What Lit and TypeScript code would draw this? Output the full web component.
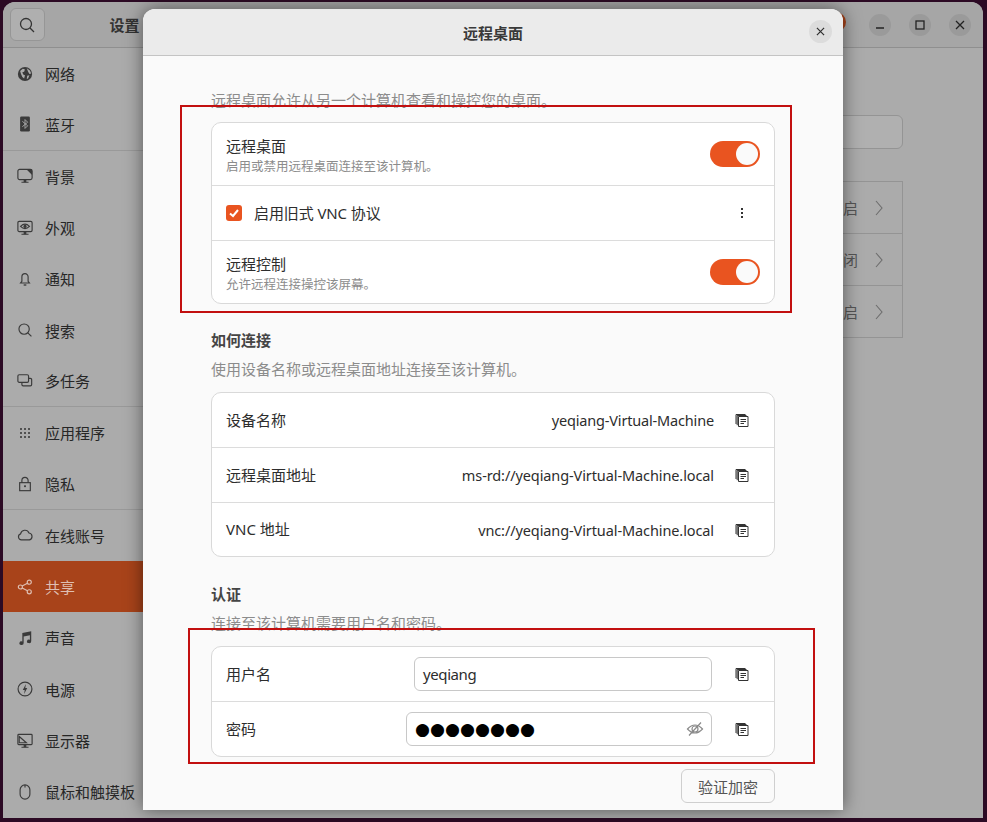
import { LitElement, html, css } from 'lit';
import { customElement } from 'lit/decorators.js';

const S = 'fill="none" stroke="currentColor" stroke-width="1.3"';

// sidebar icons, 18x18 box
const icons: Record<string, string> = {
  globe: `<circle cx="9" cy="9" r="8" fill="currentColor"/><path d="M3.500 5.500l3-2.500 2.500 1-1 2.500-2 .5 1 2.500 2 1-1 3.500-2-1.500-1.500-3.500zM11 2.500l3.500 2.500 1.500 3.500-2 .5-1.500-2.500zM11.500 11l2.500-.5-1.500 3.500-1.500.5z" fill="#ababab"/>`,
  bluetooth: `<rect x="3.500" y="0.500" width="11" height="17" rx="1.500" fill="currentColor"/><path d="M6 6l6 5-3 3V4l3 3-6 5" fill="none" stroke="#ababab" stroke-width="1"/>`,
  wallpaper: `<rect x="1" y="1.500" width="16" height="11.500" rx="2" ${S}/><path ${S} d="M5 16h8"/><path d="M10.500 1.500h5a1.500 1.500 0 0 1 1.500 1.500v5zM7.500 13h3v3h-3z" fill="currentColor"/>`,
  appearance: `<rect x="1" y="1.500" width="16" height="11.500" rx="1.500" ${S}/><path ${S} d="M5 16h8M4 7.200q5-5 10 0-5 5-10 0z"/><circle cx="9" cy="7.200" r="1.800" fill="currentColor"/><path d="M7.500 13h3v3h-3z" fill="currentColor"/>`,
  bell: `<path ${S} d="M4 13.500h10l-1.500-2V6.500a3.500 3.500 0 0 0-7 0v5z"/><path d="M7.500 15h3v1.500h-3z" fill="currentColor"/>`,
  search: `<circle cx="8" cy="8" r="5.800" ${S}/><path ${S} d="M12.200 12.200l4 4"/>`,
  tasks: `<rect x="1" y="2" width="12" height="8.500" rx="1.500" ${S}/><path ${S} d="M5.500 10.500V13a1.500 1.500 0 0 0 1.500 1.500h8a1.500 1.500 0 0 0 1.500-1.500V7.500a1.500 1.500 0 0 0-1.500-1.500h-2"/>`,
  apps: `<g fill="currentColor"><rect x="3.500" y="3.500" width="2" height="2"/><rect x="8" y="3.500" width="2" height="2"/><rect x="12.500" y="3.500" width="2" height="2"/><rect x="3.500" y="8" width="2" height="2"/><rect x="8" y="8" width="2" height="2"/><rect x="12.500" y="8" width="2" height="2"/><rect x="3.500" y="12.500" width="2" height="2"/><rect x="8" y="12.500" width="2" height="2"/><rect x="12.500" y="12.500" width="2" height="2"/></g>`,
  lock: `<rect x="3" y="7.500" width="12" height="9" ${S}/><path ${S} d="M5.500 7.500V5a3.500 3.500 0 0 1 7 0v2.500"/><rect x="8" y="10.500" width="2" height="2" fill="currentColor"/>`,
  cloud: `<path ${S} d="M5 14.500a3.500 3.500 0 0 1-1-6.800 5 5 0 0 1 9.500-1 4 4 0 0 1 .5 7.800z"/>`,
  share: `<circle cx="3.800" cy="9" r="2.300" ${S}/><circle cx="13.800" cy="3.600" r="2.300" ${S}/><circle cx="13.800" cy="14.400" r="2.300" ${S}/><path ${S} d="M5.800 8l6-3.300M5.800 10l6 3.300"/>`,
  music: `<path d="M6 3.500l10-2v11.200a2.400 2 0 1 1-1.500-1.800V6L7.500 7.400v7.300a2.400 2 0 1 1-1.500-1.800z" fill="currentColor"/>`,
  power: `<circle cx="9" cy="9" r="7.800" ${S}/><path d="M10 3.500l-3.500 6.500h2.200L8 14.500 11.500 8H9.300z" fill="currentColor"/>`,
  display: `<rect x="1" y="1.500" width="16" height="11.500" rx="1" ${S}/><path ${S} d="M2.500 4l8 7H2.500zM5 16h8"/><path d="M7.500 13h3v3h-3z" fill="currentColor"/>`,
  mouse: `<rect x="3.500" y="1" width="11" height="16" rx="5.500" ${S}/><path ${S} d="M9 1v3"/>`,
};

const sidebar = [
  { icon: 'globe', label: '网络' },
  { icon: 'bluetooth', label: '蓝牙', sep: true },
  { icon: 'wallpaper', label: '背景' },
  { icon: 'appearance', label: '外观' },
  { icon: 'bell', label: '通知' },
  { icon: 'search', label: '搜索' },
  { icon: 'tasks', label: '多任务', sep: true },
  { icon: 'apps', label: '应用程序' },
  { icon: 'lock', label: '隐私', sep: true },
  { icon: 'cloud', label: '在线账号' },
  { icon: 'share', label: '共享', active: true },
  { icon: 'music', label: '声音' },
  { icon: 'power', label: '电源' },
  { icon: 'display', label: '显示器' },
  { icon: 'mouse', label: '鼠标和触摸板' },
];

@customElement('app-root')
export class AppRoot extends LitElement {
  static styles = css`
    :host {
      display: block;
      position: relative;
      width: 987px;
      height: 822px;
      overflow: hidden;
      background: #2c0a24;
      font-family: 'Noto Sans', 'Noto Sans CJK SC', sans-serif;
      color: #2d2d2d;
    }

    /* dimmed settings window behind the dialog */
    .window {
      position: absolute;
      left: 3px;
      top: 2px;
      width: 980px;
      height: 816px;
      border-radius: 12px 12px 0 0;
      background: #ababab;
      overflow: hidden;
      display: flex;
      flex-direction: column;
    }
    .titlebar {
      height: 46px;
      box-sizing: border-box;
      flex: none;
      display: flex;
      align-items: center;
      background: #a6a6a6;
      border-bottom: 1px solid #8f8f8f;
    }
    .search-btn {
      box-sizing: border-box;
      width: 35px;
      height: 33px;
      margin-left: 6.5px;
      border: 1px solid #969696;
      border-radius: 6px;
      background: #afafaf;
      display: flex;
      align-items: center;
      justify-content: center;
      color: #333;
    }
    .app-title {
      margin-left: 65px;
      font-size: 15px;
      font-weight: 700;
      color: #333;
    }
    .wm {
      margin-left: auto;
      margin-right: 12px;
      display: flex;
      gap: 18px;
    }
    .wm span {
      width: 22px;
      height: 22px;
      border-radius: 50%;
      background: #9a9a9a;
      display: flex;
      align-items: center;
      justify-content: center;
      color: #222;
    }
    .body {
      flex: 1;
      display: flex;
    }
    .nav {
      width: 140px;
      flex: none;
    }
    .nav-item {
      height: 51.3px;
      box-sizing: border-box;
      display: flex;
      align-items: center;
      gap: 12px;
      padding-left: 14px;
      font-size: 15px;
      color: #262626;
      white-space: nowrap;
    }
    .nav-item svg {
      flex: none;
      color: #3a3a3a;
    }
    .nav-item.sep {
      border-bottom: 1px solid #999;
    }
    .nav-item.active {
      background: #a8431a;
      color: #dfbfb2;
    }
    .nav-item.active svg {
      color: #dfbfb2;
    }
    .panel {
      flex: 1;
      display: flex;
      flex-direction: column;
      align-items: flex-end;
      padding: 67px 80px 0 0;
    }
    .bg-input {
      box-sizing: border-box;
      width: 400px;
      height: 34px;
      border: 1px solid #949494;
      border-radius: 6px;
      background: #b0b0b0;
    }
    .bg-list {
      box-sizing: border-box;
      width: 400px;
      height: 157px;
      margin-top: 32px;
      border: 1px solid #949494;
      display: flex;
      flex-direction: column;
    }
    .bg-row {
      flex: 1;
      box-sizing: border-box;
      display: flex;
      align-items: center;
      justify-content: flex-end;
      gap: 16px;
      padding-right: 18px;
      font-size: 15px;
      color: #555;
    }
    .bg-row + .bg-row {
      border-top: 1px solid #949494;
    }
    .peek {
      position: absolute;
      left: 826px;
      top: 12px;
      width: 20px;
      height: 20px;
      border-radius: 50%;
      background: #a8431a;
    }

    /* dialog */
    .dialog {
      position: absolute;
      left: 143px;
      top: 9px;
      width: 700px;
      height: 801px;
      border-radius: 12px 12px 0 0;
      background: #fafafa;
      box-shadow: 0 0 18px rgba(0, 0, 0, 0.5);
      overflow: hidden;
    }
    .dialog-head {
      height: 47px;
      box-sizing: border-box;
      display: flex;
      align-items: center;
      justify-content: center;
      position: relative;
      background: #ebebeb;
      border-bottom: 1px solid #c4c4c4;
      font-size: 15px;
      font-weight: 700;
      color: #3a3a3a;
    }
    .dialog-close {
      position: absolute;
      right: 11px;
      top: 11px;
      width: 23px;
      height: 23px;
      border-radius: 50%;
      background: #dcdcdc;
      display: flex;
      align-items: center;
      justify-content: center;
      color: #2d2d2d;
    }
    .content {
      display: flex;
      flex-direction: column;
      width: 564px;
      margin: 0 auto;
    }
    .desc {
      font-size: 15px;
      line-height: 20px;
      color: #8c8c8c;
    }
    .first {
      margin-top: 34px;
    }
    h3 {
      margin: 0;
      font-size: 15px;
      line-height: 20px;
      font-weight: 700;
      color: #454545;
    }
    .connect-head {
      margin-top: 26px;
    }
    .auth-head {
      margin-top: 27px;
    }
    .connect-desc {
      margin-top: 9px;
    }
    .auth-desc {
      margin-top: 9px;
    }
    .card {
      box-sizing: border-box;
      border: 1px solid #d9d9d9;
      border-radius: 10px;
      background: #fff;
      margin-top: 12px;
    }
    .connect-card {
      margin-top: 13px;
    }
    .auth-card {
      margin-top: 13px;
    }
    .row {
      box-sizing: border-box;
      display: flex;
      align-items: center;
      padding: 0 14px;
      height: 55px;
      font-size: 15px;
      color: #2d2d2d;
    }
    .row.tall-top {
      height: 62px;
    }
    .row.tall-bottom {
      height: 63px;
    }
    .row.short {
      height: 54px;
    }
    .row + .row {
      border-top: 1px solid #dcdcdc;
    }
    .label {
      margin-bottom: 2px;
    }
    .latin {
      letter-spacing: -0.1px;
    }
    .row .value {
      margin-left: auto;
      margin-right: 21px;
      font-size: 14.5px;
      letter-spacing: -0.1px;
    }
    .row .value.narrow {
      letter-spacing: -0.17px;
    }
    .sub {
      font-size: 12.5px;
      line-height: 20px;
      margin-top: 1px;
      color: #8c8c8c;
    }
    .text-stack {
      display: flex;
      flex-direction: column;
      line-height: 20px;
      margin-top: 4px;
    }
    .toggle {
      margin-left: auto;
      width: 50px;
      height: 26px;
      border-radius: 13px;
      background: #e95420;
      display: flex;
      align-items: center;
      justify-content: flex-end;
      padding-right: 2px;
      box-sizing: border-box;
    }
    .toggle i {
      width: 22px;
      height: 22px;
      border-radius: 50%;
      background: #fafafa;
    }
    .check {
      width: 16px;
      height: 16px;
      border-radius: 3px;
      background: #e95420;
      display: flex;
      align-items: center;
      justify-content: center;
      margin-right: 12px;
      color: #fff;
    }
    .dots {
      margin-left: auto;
      margin-right: 16px;
      display: flex;
      color: #333;
    }
    .copy {
      flex: none;
      display: block;
      color: #333;
      margin-right: 11px;
    }
    .field {
      box-sizing: border-box;
      height: 34px;
      border: 1px solid #c8c8c8;
      border-radius: 6px;
      background: #fff;
      margin-left: auto;
      margin-right: 23px;
      display: flex;
      align-items: center;
      font-size: 15px;
    }
    .user {
      width: 298px;
      padding-left: 8px;
      letter-spacing: -0.4px;
    }
    .pass {
      width: 306px;
      padding: 0 7px 0 8px;
      justify-content: space-between;
    }
    .mask {
      font-family: 'DejaVu Sans', sans-serif;
      font-size: 17.2px;
      color: #000;
      white-space: nowrap;
    }
    .pass svg {
      color: #8a8a8a;
    }
    .btn {
      align-self: flex-end;
      box-sizing: border-box;
      margin-top: 12px;
      width: 94px;
      height: 34px;
      border: 1px solid #cfcfcf;
      border-radius: 6px;
      background: #fafafa;
      display: flex;
      align-items: center;
      justify-content: center;
      font-size: 15px;
      color: #555;
    }

    /* red annotation frames drawn over the screenshot */
    .mark {
      position: absolute;
      box-sizing: border-box;
      border: 2px solid #c20f0f;
      pointer-events: none;
    }
    .mark-a {
      left: 180px;
      top: 105px;
      width: 612px;
      height: 208px;
    }
    .mark-b {
      left: 188px;
      top: 628px;
      width: 627px;
      height: 136px;
    }
  `;

  private icon(name: string) {
    return html`<svg
      width="16"
      height="16"
      viewBox="0 0 18 18"
      .innerHTML=${icons[name]}
    ></svg>`;
  }

  private copy() {
    return html`<svg class="copy" width="14" height="14" viewBox="0 0 14 14" fill="none" stroke="currentColor" stroke-width="1">
      <path d="M3.500 3.500h9.500v10H3.500zM1 11V1.500h9.500M2.200 12.200V2.500h9.300" />
      <path d="M5.500 6.500h5.500M5.500 8.500h5.500M5.500 10.500h3.500" />
    </svg>`;
  }

  private x(size = 10) {
    return html`<svg width=${size} height=${size} viewBox="0 0 10 10" stroke="currentColor" stroke-width="1.300">
      <path d="M1 1l8 8M9 1l-8 8" />
    </svg>`;
  }

  render() {
    return html`
      <div class="window">
        <div class="titlebar">
          <div class="search-btn">
            <svg width="16" height="16" viewBox="0 0 16 16" fill="none" stroke="currentColor" stroke-width="1.300">
              <circle cx="7" cy="7" r="5.500" /><path d="M11 11l4 4" />
            </svg>
          </div>
          <span class="app-title">设置</span>
          <div class="wm">
            <span>
              <svg width="10" height="10" viewBox="0 0 10 10" stroke="currentColor" stroke-width="1.300"><path d="M1 8h8" /></svg>
            </span>
            <span>
              <svg width="10" height="10" viewBox="0 0 10 10" fill="none" stroke="currentColor" stroke-width="1.300"><rect x="1" y="1" width="8" height="8" /></svg>
            </span>
            <span>${this.x()}</span>
          </div>
        </div>
        <div class="body">
          <nav class="nav">
            ${sidebar.map(
              (item) => html`<div class="nav-item ${item.sep ? 'sep' : ''} ${item.active ? 'active' : ''}">
                ${this.icon(item.icon)}<span>${item.label}</span>
              </div>`
            )}
          </nav>
          <div class="panel">
            <div class="bg-input"></div>
            <div class="bg-list">
              ${['已开启', '已关闭', '已开启'].map(
                (t) => html`<div class="bg-row">
                  <span>${t}</span>
                  <svg width="10" height="16" viewBox="0 0 10 16" fill="none" stroke="#6d6d6d" stroke-width="1.100"><path d="M2 1l6 7-6 7" /></svg>
                </div>`
              )}
            </div>
          </div>
        </div>
      </div>
      <div class="peek"></div>

      <div class="dialog">
        <div class="dialog-head">
          远程桌面
          <div class="dialog-close">${this.x(9)}</div>
        </div>
        <div class="content">
          <div class="desc first">远程桌面允许从另一个计算机查看和操控您的桌面。</div>
          <div class="card">
            <div class="row tall-top">
              <div class="text-stack">
                <span>远程桌面</span>
                <span class="sub">启用或禁用远程桌面连接至该计算机。</span>
              </div>
              <div class="toggle"><i></i></div>
            </div>
            <div class="row">
              <div class="check">
                <svg width="12" height="12" viewBox="0 0 12 12" fill="none" stroke="currentColor" stroke-width="2"><path d="M2 6.500l3 2.500 5-6" /></svg>
              </div>
              <span class="label latin">启用旧式 VNC 协议</span>
              <div class="dots">
                <svg width="4" height="12" viewBox="0 0 4 12" fill="currentColor">
                  <rect x="1" y="1" width="2" height="2" /><rect x="1" y="5" width="2" height="2" /><rect x="1" y="9" width="2" height="2" />
                </svg>
              </div>
            </div>
            <div class="row tall-bottom">
              <div class="text-stack">
                <span>远程控制</span>
                <span class="sub">允许远程连接操控该屏幕。</span>
              </div>
              <div class="toggle"><i></i></div>
            </div>
          </div>

          <h3 class="connect-head">如何连接</h3>
          <div class="desc connect-desc">使用设备名称或远程桌面地址连接至该计算机。</div>
          <div class="card connect-card">
            <div class="row short">
              <span class="label">设备名称</span><span class="value narrow">yeqiang-Virtual-Machine</span>${this.copy()}
            </div>
            <div class="row">
              <span class="label">远程桌面地址</span><span class="value">ms-rd://yeqiang-Virtual-Machine.local</span>${this.copy()}
            </div>
            <div class="row short">
              <span class="label">VNC 地址</span><span class="value">vnc://yeqiang-Virtual-Machine.local</span>${this.copy()}
            </div>
          </div>

          <h3 class="auth-head">认证</h3>
          <div class="desc auth-desc">连接至该计算机需要用户名和密码。</div>
          <div class="card auth-card">
            <div class="row short">
              <span class="label">用户名</span>
              <div class="field user">yeqiang</div>
              ${this.copy()}
            </div>
            <div class="row">
              <span class="label">密码</span>
              <div class="field pass">
                <span class="mask">●●●●●●●●</span>
                <svg width="18" height="18" viewBox="0 0 18 18" fill="none" stroke="currentColor" stroke-width="1.200">
                  <path d="M1.500 9q7.500-8 15 0-7.500 8-15 0zM3 15.500L15 2.500" />
                  <circle cx="9" cy="9" r="3" />
                </svg>
              </div>
              ${this.copy()}
            </div>
          </div>
          <div class="btn">验证加密</div>
        </div>
      </div>

      <div class="mark mark-a"></div>
      <div class="mark mark-b"></div>
    `;
  }
}
